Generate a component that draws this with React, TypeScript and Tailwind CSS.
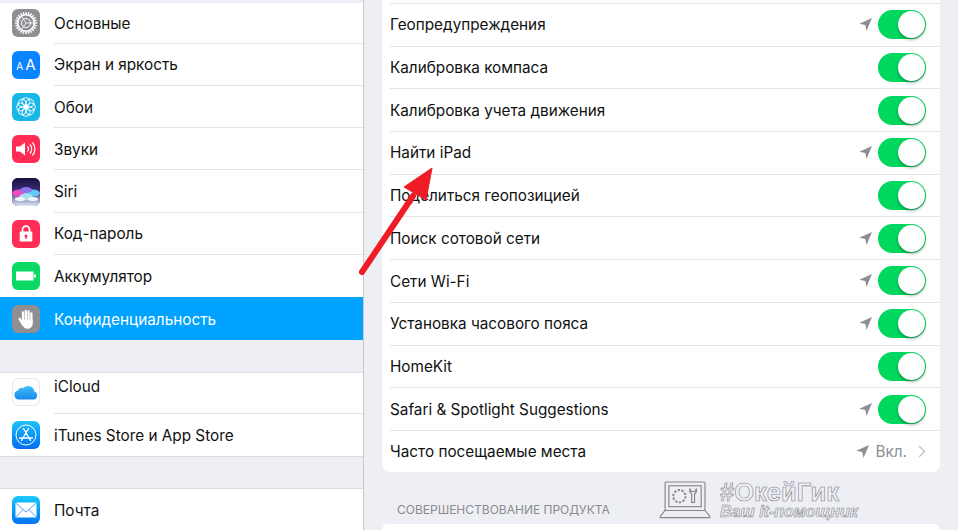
const FONT = "font-['Inter','Liberation_Sans',sans-serif]";

const locationRows = [
  { label: "Геопредупреждения", arrow: true },
  { label: "Калибровка компаса", arrow: false },
  { label: "Калибровка учета движения", arrow: false },
  { label: "Найти iPad", arrow: true },
  { label: "Поделиться геопозицией", arrow: false },
  { label: "Поиск сотовой сети", arrow: true },
  { label: "Сети Wi-Fi", arrow: true },
  { label: "Установка часового пояса", arrow: true },
  { label: "HomeKit", arrow: false },
  { label: "Safari & Spotlight Suggestions", arrow: true },
];

function Tile({ className, children }: { className: string; children: React.ReactNode }) {
  return (
    <div className={`flex h-7 w-7 shrink-0 items-center justify-center overflow-hidden rounded-md ${className}`}>
      {children}
    </div>
  );
}

function GearIcon() {
  const teeth = Array.from({ length: 24 }, (_, i) => i * 15);
  return (
    <svg width="24" height="24" viewBox="0 0 24 24" fill="none" stroke="#fff">
      {teeth.map((deg) => (
        <line key={deg} x1="12" y1="1" x2="12" y2="3.5" strokeWidth="1.5" transform={`rotate(${deg} 12 12)`} />
      ))}
      <circle cx="12" cy="12" r="8.2" strokeWidth="1.6" />
      <circle cx="12" cy="12" r="4.5" strokeWidth="1" />
      <path d="M12 12 19 12M12 12 8 6M12 12 8 18" strokeWidth="0.8" />
    </svg>
  );
}

function FlowerIcon() {
  const petals = [0, 45, 90, 135, 180, 225, 270, 315];
  return (
    <svg width="24" height="24" viewBox="0 0 24 24" fill="none" stroke="#fff" strokeWidth="0.9">
      {petals.map((deg) => (
        <circle key={deg} cx="12" cy="6.6" r="4" transform={`rotate(${deg} 12 12)`} />
      ))}
      <circle cx="12" cy="12" r="2" fill="#fff" />
    </svg>
  );
}

function SoundIcon() {
  return (
    <svg width="22" height="18" viewBox="0 0 22 18" fill="none">
      <path d="M1 6.5h4L10 2.5v13l-5-4H1z" fill="#fff" />
      <path d="M12.5 6.5a3.5 3.5 0 0 1 0 5M15 4.5a7 7 0 0 1 0 9M17.5 2.5a10 10 0 0 1 0 13" stroke="#fff" strokeWidth="1.2" />
    </svg>
  );
}

function SiriIcon() {
  return (
    <svg width="28" height="28" viewBox="0 0 28 28">
      <defs>
        <linearGradient id="siriBg" x1="0" y1="0" x2="0" y2="1">
          <stop offset="0" stopColor="#16123f" />
          <stop offset="0.45" stopColor="#3a2a78" />
          <stop offset="1" stopColor="#dfe9f5" />
        </linearGradient>
      </defs>
      <rect width="28" height="28" fill="url(#siriBg)" />
      <ellipse cx="7" cy="15" rx="7" ry="3.5" fill="#f04ac0" />
      <ellipse cx="20" cy="15" rx="8" ry="3.5" fill="#62c9f2" />
      <ellipse cx="14" cy="19" rx="7" ry="3.5" fill="#a5e0f7" />
      <ellipse cx="14" cy="12" rx="6" ry="3" fill="#8f74e8" />
      <ellipse cx="8" cy="21" rx="5" ry="2" fill="#f3f6fb" />
      <ellipse cx="21" cy="21" rx="5" ry="2" fill="#eef5fb" />
    </svg>
  );
}

function LockIcon() {
  return (
    <svg width="14" height="17" viewBox="0 0 14 17" fill="none">
      <path d="M3.5 7V4.6a3.5 3.5 0 0 1 7 0V7" stroke="#fff" strokeWidth="1.7" />
      <path fillRule="evenodd" d="M1.5 6.5h11a.8.8 0 0 1 .8.8v8.4a.8.8 0 0 1-.8.8h-11a.8.8 0 0 1-.8-.8V7.300a.8.8 0 0 1 .8-.8zM7 9.500a1.500 1.500 0 0 0-.7 2.800V14h1.400v-1.700A1.500 1.500 0 0 0 7 9.500z" fill="#fff" />
    </svg>
  );
}

function BatteryIcon() {
  return (
    <svg width="20" height="10" viewBox="0 0 20 10">
      <rect x="0" y="0.5" width="17.500" height="9" fill="#fff" />
      <rect x="18" y="3.500" width="2" height="3" fill="#fff" />
    </svg>
  );
}

function HandIcon() {
  return (
    <svg width="16" height="20" viewBox="0 0 16 20" fill="#fff" stroke="#fff" strokeLinecap="round">
      <path d="M5 11V3.500M7.800 11V1.800M10.600 11V2.500M13.400 12V4.500" strokeWidth="2.300" />
      <path d="M1.600 9.800 4.500 15" strokeWidth="2.300" />
      <path d="M4 11h10.500v3.500c0 3-2.200 5-5 5-2.500 0-3.800-1.200-4.700-3z" strokeWidth="0.500" />
    </svg>
  );
}

function CloudIcon() {
  return (
    <svg width="24" height="16" viewBox="0 0 24 16">
      <defs>
        <linearGradient id="cloudFill" x1="0" y1="0" x2="0" y2="1">
          <stop offset="0" stopColor="#3fc0f5" />
          <stop offset="1" stopColor="#1b87ee" />
        </linearGradient>
      </defs>
      <path d="M5 15.500a4.500 4.500 0 0 1-1-8.900 4 4 0 0 1 5.500-2.500A6.200 6.200 0 0 1 20.300 7.200 4.300 4.300 0 0 1 19.500 15.500z" fill="url(#cloudFill)" />
    </svg>
  );
}

function AppStoreIcon() {
  return (
    <svg width="24" height="24" viewBox="0 0 24 24" fill="none" stroke="#fff">
      <circle cx="12" cy="12" r="10" strokeWidth="1" />
      <path d="M9.500 5.500 16.500 17.500M14.500 5.500 7.500 17.500M5.500 15h13" strokeWidth="1.400" strokeLinecap="round" />
    </svg>
  );
}

function MailIcon() {
  return (
    <svg width="22" height="16" viewBox="0 0 22 16" fill="none" stroke="#0b7cf0" strokeWidth="0.7">
      <rect x="0.500" y="0.500" width="21" height="15" fill="#fff" stroke="none" />
      <path d="M.5.800 11 10 21.500.800M.5 15.500 8 7.500M21.500 15.500 14 7.500" />
    </svg>
  );
}

function LocationArrow({ className }: { className: string }) {
  return (
    <svg width="13" height="13" viewBox="0 0 13 13" className={className}>
      <path d="M13 0 .3 5.800 6.300 7 7.500 13z" />
    </svg>
  );
}

function Toggle() {
  return (
    <div className="relative h-[29px] w-12 shrink-0 rounded-full bg-[#00d75f]">
      <div className="absolute right-px top-px h-[27px] w-[27px] rounded-full bg-white shadow-[0_2px_3px_rgb(0_0_0_/_0.3)]" />
    </div>
  );
}

function SidebarRow({
  icon,
  label,
  heightClass = "h-[42.3px]",
  selected = false,
  divider = true,
  alignClass = "items-center pt-[3px]",
}: {
  icon: React.ReactNode;
  label: string;
  heightClass?: string;
  selected?: boolean;
  divider?: boolean;
  alignClass?: string;
}) {
  return (
    <div className={`flex items-center gap-3.5 pl-3 ${heightClass} ${selected ? "bg-[#00a2ff] text-white" : "text-[#111]"}`}>
      {icon}
      <div className={`flex h-full flex-1 ${alignClass} text-[15.300px] ${divider ? "border-b border-[#e3e3e8]" : ""}`}>
        {label}
      </div>
    </div>
  );
}

export default function App() {
  return (
    <div className={`relative flex h-[530px] w-[958px] overflow-hidden bg-[#eeeff5] ${FONT}`}>
      <aside className="flex w-[364px] shrink-0 flex-col border-r border-[#c8c8cd]">
        <div className="mt-[3px] bg-white">
          <SidebarRow heightClass="h-[40.600px]" icon={<Tile className="bg-[#8e8e93]"><GearIcon /></Tile>} label="Основные" />
          <SidebarRow
            icon={
              <Tile className="gap-0.5 bg-[#0a84ff] text-white">
                <span className="mt-0.5 text-[10px] leading-none">A</span>
                <span className="text-[15px] leading-none">A</span>
              </Tile>
            }
            label="Экран и яркость"
          />
          <SidebarRow icon={<Tile className="bg-[#19b6e8]"><FlowerIcon /></Tile>} label="Обои" />
          <SidebarRow icon={<Tile className="bg-[#ff2d55]"><SoundIcon /></Tile>} label="Звуки" />
          <SidebarRow icon={<Tile className="bg-[#221c56]"><SiriIcon /></Tile>} label="Siri" />
          <SidebarRow icon={<Tile className="bg-[#ff2d55]"><LockIcon /></Tile>} label="Код-пароль" />
          <SidebarRow icon={<Tile className="bg-[#0ad964]"><BatteryIcon /></Tile>} divider={false} label="Аккумулятор" />
          <SidebarRow selected divider={false} icon={<Tile className="bg-[#8e8e93]"><HandIcon /></Tile>} label="Конфиденциальность" />
        </div>

        <div className="mt-[32px] border-y border-[#dcdce1] bg-white">
          <SidebarRow
            heightClass="h-[41px]"
            alignClass="items-start pt-[3px]"
            icon={<Tile className="-mt-0.5 border border-[#e8e8ec] bg-white"><CloudIcon /></Tile>}
            label="iCloud"
          />
          <SidebarRow
            divider={false}
            alignClass="items-center pt-[4px]"
            icon={<Tile className="bg-gradient-to-b from-[#24c1fb] to-[#0b6cf0]"><AppStoreIcon /></Tile>}
            label="iTunes Store и App Store"
          />
        </div>

        <div className="mt-[31px] flex-1 border-t border-[#dcdce1] bg-white">
          <SidebarRow
            divider={false}
            alignClass="items-center pt-[2px]"
            icon={<Tile className="bg-gradient-to-b from-[#1ec8fb] to-[#0b72f0]"><MailIcon /></Tile>}
            label="Почта"
          />
        </div>
      </aside>

      <main className="flex min-w-0 flex-1 flex-col px-[18px]">
        <section className="-mt-1 rounded-b-lg bg-white pl-2 pt-[7px]">
          {locationRows.map((row) => (
            <div
              key={row.label}
              className="flex h-[42.7px] items-center border-t border-[#e3e3e8] pr-3.5 text-[15.300px] text-[#111]"
            >
              <span className="flex-1 pt-[2px]">{row.label}</span>
              {row.arrow ? <LocationArrow className="mr-[6px] fill-[#8e8e93]" /> : null}
              <Toggle />
            </div>
          ))}
          <div className="flex h-[42.300px] items-center border-t border-[#e3e3e8] pr-3.5 text-[15.300px] text-[#111]">
            <span className="flex-1 pt-[2px]">Часто посещаемые места</span>
            <LocationArrow className="mr-[6px] fill-[#8e8e93]" />
            <span className="pt-[2px] text-[#8e8e93]">Вкл.</span>
            <svg width="8" height="13" viewBox="0 0 8 13" fill="none" stroke="#c7c7cc" strokeWidth="1.500" className="ml-[11px]">
              <path d="M1 1l5.500 5.500L1 12" />
            </svg>
          </div>
        </section>

        <div className="mt-[30px] pl-[15px] text-xs text-[#8a8a8f]">СОВЕРШЕНСТВОВАНИЕ ПРОДУКТА</div>
        <div className="mt-[6px] h-8 rounded-t-lg bg-white" />
      </main>

      <Watermark />
      <RedArrow />
    </div>
  );
}

function Watermark() {
  return (
    <div className="absolute left-[659px] top-[481px] flex items-start">
      <svg width="54" height="38" viewBox="0 0 56 40" fill="#eeeff5" stroke="#85858a" strokeWidth="1.200" className="mr-[7px]">
        <rect x="6" y="1" width="42" height="30" rx="1" />
        <rect x="10" y="5" width="34" height="22" />
        <path d="M6 31 1 37v1.500h52V37l-5-6z" />
        <circle cx="21" cy="16" r="3" />
        <circle cx="21" cy="16" r="6.500" strokeDasharray="2.500 1.500" strokeWidth="2" />
        <path d="M32 8v3.500l2 2v9h3v-9l2-2V8l-1.500 3h-4z" />
      </svg>
      <div className="flex flex-col font-['Liberation_Sans',sans-serif] text-transparent [-webkit-text-stroke:0.600px_#85858a]">
        <span className="text-[25.500px] font-bold leading-[23px]">#ОкейГик</span>
        <span className="text-[16px] font-bold italic leading-[15px]">Ваш it-помощник</span>
      </div>
    </div>
  );
}

function RedArrow() {
  return (
    <svg width="90" height="125" viewBox="0 0 90 125" className="absolute left-[355px] top-[160px]" fill="#ee1c25">
      <path d="M7 112 58 36" stroke="#ee1c25" strokeWidth="6" strokeLinecap="round" />
      <path d="M77 8 49 27 71 40z" stroke="#ee1c25" strokeWidth="1" />
    </svg>
  );
}
